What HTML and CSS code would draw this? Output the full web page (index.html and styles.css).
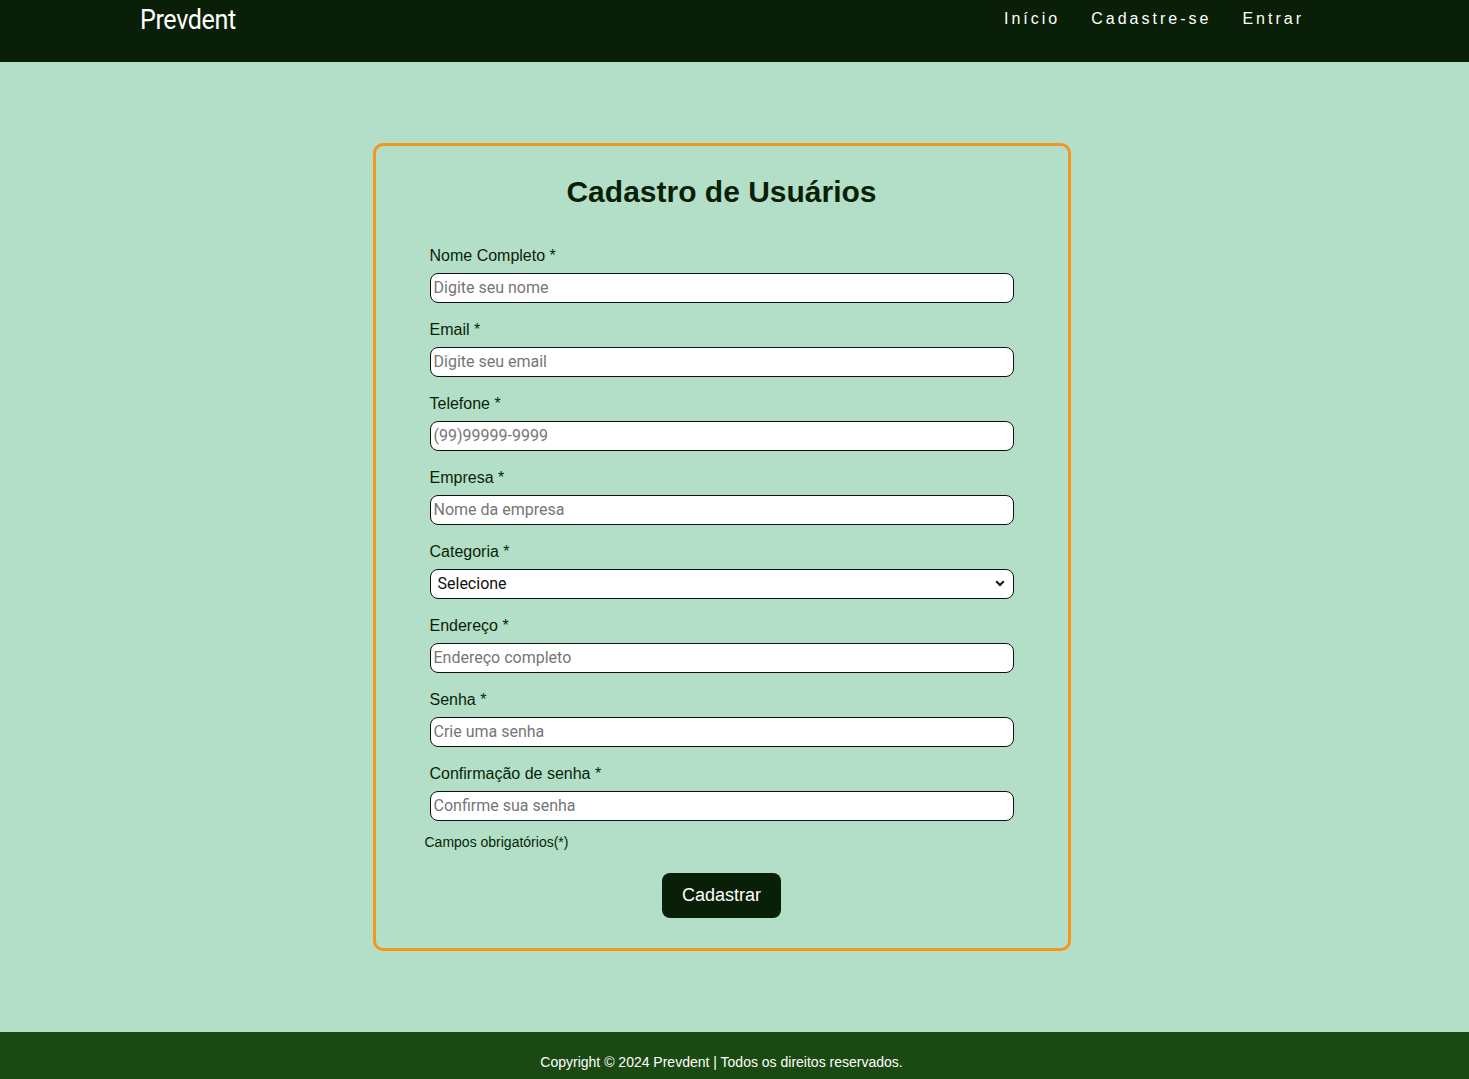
FILE: index.html
```html
<!DOCTYPE html>
<html lang="pt-BR">
<head>
<meta charset="utf-8">
<title>Prevdent - Cadastro</title>
<link rel="stylesheet" href="styles.css">
</head>
<body>
<header class="topbar">
  <div class="logo">Prevdent</div>
  <nav class="nav">
    <a href="#">Início</a>
    <a href="#">Cadastre-se</a>
    <a href="#">Entrar</a>
  </nav>
</header>
<main class="main">
  <section class="card">
    <h1 class="title">Cadastro de Usuários</h1>
    <form class="form">
      <div class="group">
        <label class="label">Nome Completo *</label>
        <input class="field" type="text" placeholder="Digite seu nome">
      </div>
      <div class="group">
        <label class="label">Email *</label>
        <input class="field" type="email" placeholder="Digite seu email">
      </div>
      <div class="group">
        <label class="label">Telefone *</label>
        <input class="field" type="text" placeholder="(99)99999-9999">
      </div>
      <div class="group">
        <label class="label">Empresa *</label>
        <input class="field" type="text" placeholder="Nome da empresa">
      </div>
      <div class="group">
        <label class="label">Categoria *</label>
        <div class="select">
          <span>Selecione</span>
          <svg class="chev" width="10" height="7" viewBox="0 0 10 7"><path d="M1.2 1.2 L5 5 L8.8 1.2" fill="none" stroke="#111" stroke-width="2"/></svg>
        </div>
      </div>
      <div class="group">
        <label class="label">Endereço *</label>
        <input class="field" type="text" placeholder="Endereço completo">
      </div>
      <div class="group">
        <label class="label">Senha *</label>
        <input class="field" type="password" placeholder="Crie uma senha">
      </div>
      <div class="group last">
        <label class="label">Confirmação de senha *</label>
        <input class="field" type="password" placeholder="Confirme sua senha">
      </div>
      <p class="req">Campos obrigatórios(*)</p>
      <div class="actions">
        <button class="btn" type="button">Cadastrar</button>
      </div>
    </form>
  </section>
</main>
<footer class="footer">Copyright © 2024 Prevdent | Todos os direitos reservados.</footer>
</body>
</html>
```
FILE: styles.css
```css
* { box-sizing: border-box; }
html, body { margin: 0; padding: 0; }
body {
  font-family: "Liberation Sans", Arial, sans-serif;
  background: #b3dfc8;
  color: #0a1f07;
}
.topbar {
  height: 62px;
  background: #0a1f07;
  display: flex;
  justify-content: space-between;
  align-items: flex-start;
  padding: 0 165px 0 140px;
}
.logo {
  font-family: Roboto, "Liberation Sans", sans-serif;
  font-size: 27px;
  color: #ffffff;
  line-height: 40px;
  letter-spacing: -0.4px;
  transform: scaleX(0.93);
  transform-origin: left center;
}
.nav {
  display: flex;
  gap: 31px;
  padding-top: 9px;
}
.nav a {
  color: #ffffff;
  text-decoration: none;
  font-size: 16px;
  letter-spacing: 3px;
  line-height: 20px;
}
.main {
  height: 970px;
  padding-top: 81px;
  padding-right: 26px;
  display: flex;
  justify-content: center;
  align-items: flex-start;
}
.card {
  width: 698px;
  height: 808px;
  border: 3px solid #f7941d;
  border-radius: 10px;
  padding: 28px 54px 0 54px;
}
.title {
  margin: 0 0 37px 0;
  text-align: center;
  font-size: 30px;
  line-height: 36px;
  font-weight: bold;
  color: #0a1f07;
}
.group { margin-bottom: 18px; }
.group.last { margin-bottom: 0; }
.label {
  display: block;
  font-size: 16px;
  line-height: 18px;
  margin-bottom: 8px;
  color: #0a1f07;
}
.field {
  display: block;
  width: 584px;
  height: 30px;
  border: 1px solid #111;
  border-radius: 8px;
  background: #ffffff;
  padding: 0 3px 1px 3px;
  font-family: Roboto, "Liberation Sans", sans-serif;
  font-size: 16px;
  color: #222;
  outline: none;
}
.field::placeholder { color: #767676; }
.select {
  width: 584px;
  height: 30px;
  border: 1px solid #111;
  border-radius: 8px;
  background: #ffffff;
  display: flex;
  align-items: center;
  justify-content: space-between;
  padding: 0 8px 1px 7px;
  font-family: Roboto, "Liberation Sans", sans-serif;
  font-size: 16px;
  color: #111;
}
.chev { display: block; }
.req {
  margin: 13px 0 0 -5px;
  font-size: 14px;
  line-height: 16px;
  color: #0a1f07;
}
.actions {
  display: flex;
  justify-content: center;
  margin-top: 23px;
}
.btn {
  width: 119px;
  height: 45px;
  border: none;
  border-radius: 8px;
  background: #0a1f07;
  color: #ffffff;
  font-family: "Liberation Sans", Arial, sans-serif;
  font-size: 18px;
}
.footer {
  height: 47px;
  background: #1a4a12;
  color: #ffffff;
  font-size: 14px;
  text-align: center;
  padding-top: 22px;
  padding-right: 26px;
  line-height: 16px;
}
```
